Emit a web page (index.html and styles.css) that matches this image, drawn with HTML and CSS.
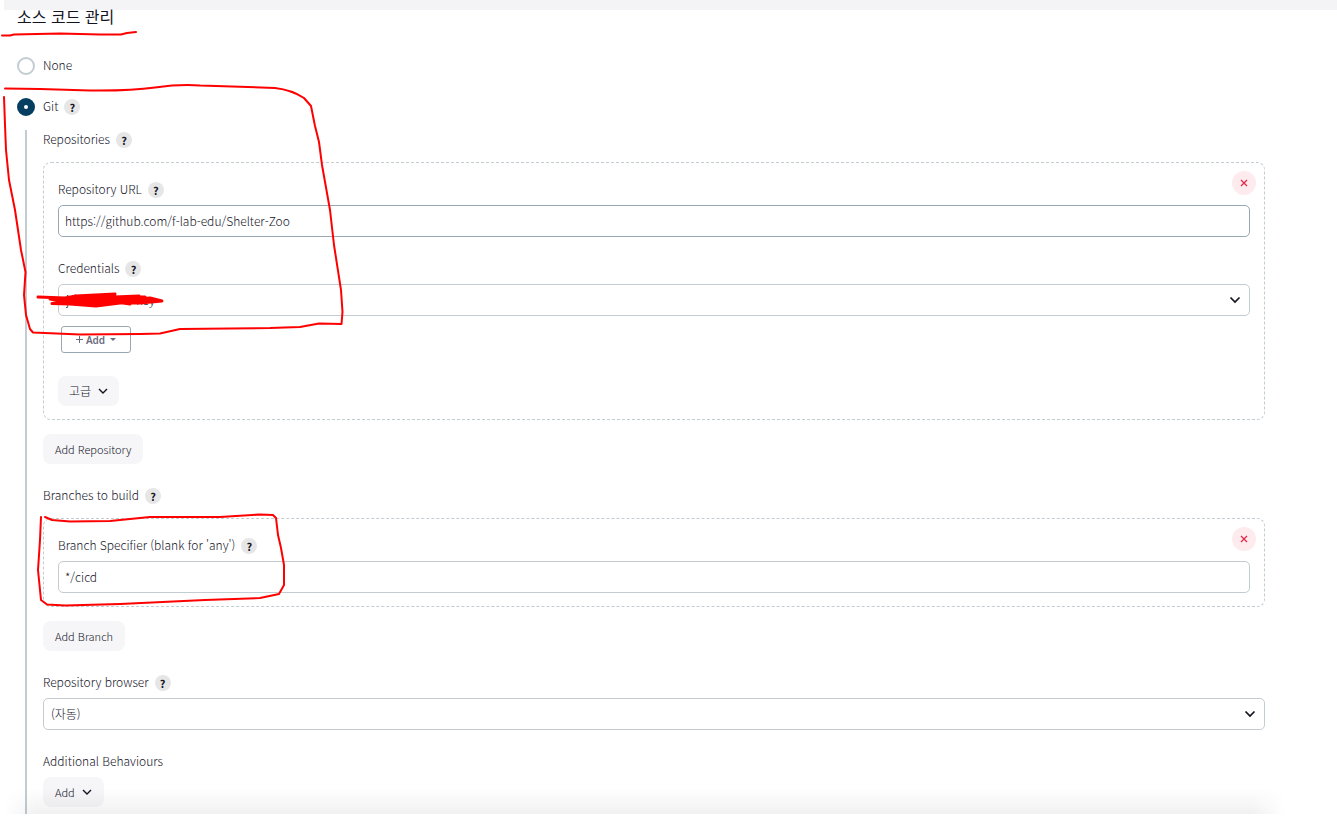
FILE: index.html
```html
<!DOCTYPE html>
<html lang="ko">
<head>
<meta charset="utf-8">
<title>소스 코드 관리</title>
<link rel="stylesheet" href="styles.css">
</head>
<body>
<div class="topbar"></div>
<main class="page">
  <h1 class="title">소스 코드 관리</h1>
  <form class="form">
    <div class="choice"><input class="radio" type="radio" name="scm" id="none"><label for="none">None</label></div>
    <div class="choice"><input class="radio" type="radio" name="scm" id="git" checked><label for="git">Git</label><button type="button" class="help" aria-label="Help: Git">?</button></div>
    <div class="nested">
      <div class="group">
        <div class="label"><span>Repositories</span><button type="button" class="help">?</button></div>
        <div class="box">
          <button type="button" class="remove" aria-label="Remove"><svg width="8" height="8" viewBox="0 0 8 8"><path d="M1 1l6 6M7 1L1 7"/></svg></button>
          <div class="label"><label for="url">Repository URL</label><button type="button" class="help">?</button></div>
          <input class="field strong" id="url" type="text" value="https://github.com/f-lab-edu/Shelter-Zoo">
          <div class="label spaced"><label for="cred">Credentials</label><button type="button" class="help">?</button></div>
          <div class="select"><select class="field" id="cred"><option>j&nbsp;&nbsp;&nbsp;&nbsp;&nbsp;&nbsp;&nbsp;&nbsp;&nbsp;&nbsp;&nbsp;&nbsp;&nbsp;&nbsp;&nbsp;&nbsp;&nbsp;&nbsp;&nbsp;&nbsp;key</option></select><svg class="arrow" width="12" height="8" viewBox="0 0 12 8"><path d="M1.500 1.500L6 6l4.500-4.500"/></svg></div>
          <button type="button" class="add"><svg width="7" height="7" viewBox="0 0 7 7"><path d="M3.500 0v7M0 3.500h7"/></svg><span>Add</span><i class="caret"></i></button>
          <button type="button" class="btn advanced">고급<svg class="chev" width="10" height="6" viewBox="0 0 10 6"><path d="M1 1l4 4 4-4"/></svg></button>
        </div>
        <button type="button" class="btn">Add Repository</button>
      </div>
      <div class="group">
        <div class="label"><span>Branches to build</span><button type="button" class="help">?</button></div>
        <div class="box">
          <button type="button" class="remove" aria-label="Remove"><svg width="8" height="8" viewBox="0 0 8 8"><path d="M1 1l6 6M7 1L1 7"/></svg></button>
          <div class="label"><label for="branch">Branch Specifier (blank for 'any')</label><button type="button" class="help">?</button></div>
          <input class="field" id="branch" type="text" value="*/cicd">
        </div>
        <button type="button" class="btn">Add Branch</button>
      </div>
      <div class="group">
        <div class="label"><label for="browser">Repository browser</label><button type="button" class="help">?</button></div>
        <div class="select"><select class="field" id="browser"><option>(자동)</option></select><svg class="arrow" width="12" height="8" viewBox="0 0 12 8"><path d="M1.500 1.500L6 6l4.500-4.500"/></svg></div>
      </div>
      <div class="group">
        <div class="label"><span>Additional Behaviours</span></div>
        <button type="button" class="btn">Add<svg class="chev" width="10" height="6" viewBox="0 0 10 6"><path d="M1 1l4 4 4-4"/></svg></button>
      </div>
    </div>
  </form>
  <div class="fade"></div>
</main>
<svg class="marks" width="360" height="620" viewBox="0 0 360 620">
  <path d="M2 35.500L10 35.500 14 34.500 60 33.500 100 34.500 121 34.500 127 33 136 32"/>
  <path d="M5 88.500L40 89 90 90.500Q130 91 155 87.500T200 85.500L275 88Q292 90 304 98L311 106 315 126 319 142 322 165 330 210 334 245 341 290 342.500 312 341.500 324 319 323.500 300 327 270 328 180 329 160 333.500 140 334 80 334.500 33 332.500 30 329 26 315 24 295 25.500 272 21 250 15 210 9 180 6 150 5 125 4 97"/>
  <path d="M41 517L40 540 38 570 41 600 47 604.500 65 605.500 120 604 205 600 260 598 279 594 284 585 284 565 281 548 278 535 276 518 273 515 260 514.500 220 517 150 517 110 521 70 521.500 52 520 45 517"/>
  <path class="scribble" d="M38 297L65 298 76 296 115 294 114 297 139 296 138 299 150 298 162 301 140 303 120 303 96 306 70 304 52 303.500 66 302 50 299 90 297 145 297M60 300L150 301M75 296L130 304M70 303L135 297"/>
</svg>
</body>
</html>
```
FILE: styles.css
```css
* { box-sizing: border-box; }
body { margin: 0; background: #fff; color: #14141f; font-family: "Noto Sans CJK KR", sans-serif; font-size: 12px; font-weight: 300; line-height: 20px; position: relative; }
button, input, select { font: inherit; color: inherit; margin: 0; }
button { border: 0; cursor: pointer; }
svg path { fill: none; stroke: currentColor; }
.topbar { height: 10px; margin-left: 4px; background: #f4f4f6; }
.page { position: relative; margin-left: 4px; }
.title { margin: -6px 0 28px 13px; font-size: 16px; line-height: 24px; font-weight: 400; }
.form { margin: 0 72px 0 13px; }
.choice { display: flex; align-items: center; height: 20px; margin-bottom: 21px; }
.choice label { margin-left: 8px; }
.choice:nth-child(2) { margin-bottom: 13px; }
.choice label, .label > label, .label > span { padding-bottom: 2px; }
.radio { appearance: none; width: 18px; height: 18px; border: 2px solid #c3ccd1; border-radius: 50%; background: #fff; }
.radio:checked { border: 7px solid #063e62; }
.help { width: 16px; height: 16px; margin-left: 6px; padding: 0; border-radius: 50%; background: #e6e6e6; font-size: 11px; font-weight: 700; line-height: 16px; text-align: center; }
.nested { margin-left: 8px; padding: 0 0 7px 16px; border-left: 2px solid #c3ccd1; }
.group + .group { margin-top: 22px; }
.label { display: flex; align-items: center; height: 20px; margin-bottom: 5px; }
.label:has(+ .box) { margin-bottom: 12px; }
.spaced { margin-top: 22px; }
.box { position: relative; border: 1px dashed #c3ccd1; border-radius: 8px; padding: 17px 14px 13px; margin-bottom: 14px; }
.remove { position: absolute; top: 8px; right: 8px; display: grid; place-items: center; width: 24px; height: 24px; padding: 0; border-radius: 50%; background: #fdebed; color: #e6274b; }
.remove path { stroke-width: 1.300; }
.field { display: block; width: 100%; height: 32px; padding: 0 6px 2px; border: 1px solid #c3ccd1; border-radius: 5px; background: #fff; }
.strong { border-color: #98a7b2; }
.select { position: relative; }
select.field { appearance: none; padding: 0 7px; }
.arrow { position: absolute; right: 9px; top: 12px; pointer-events: none; }
.arrow path { stroke-width: 1.700; }
.add { display: flex; align-items: center; justify-content: center; gap: 3px; width: 70px; height: 27px; margin: 10px 0 23px 3px; padding: 0; border: 1px solid #98a7b2; border-radius: 3px; background: #fff; color: #6b6b80; font-family: "Noto Sans", sans-serif; font-size: 10px; font-weight: 600; }
.caret { border: 3px solid transparent; border-top-color: currentColor; border-bottom: 0; margin-left: 2px; }
.btn { display: flex; align-items: center; height: 30px; padding: 0 12px; border-radius: 8px; background: #f6f6f9; font-size: 11px; }
.advanced { padding: 0 11px; font-size: 12px; }
.chev { margin-left: 7px; }
.chev path { stroke-width: 1.400; }
.fade { position: absolute; left: 0; right: 52px; bottom: 0; height: 26px; background: linear-gradient(#0000, #0000000e); mask-image: linear-gradient(90deg, #0000, #000 32px calc(100% - 32px), #0000); pointer-events: none; }
.marks { position: absolute; left: 0; top: 0; z-index: 2; color: #f00; pointer-events: none; }
.marks path { stroke-width: 2; stroke-linejoin: round; stroke-linecap: round; }
.marks .scribble { stroke-width: 3; fill: currentColor; }
```
